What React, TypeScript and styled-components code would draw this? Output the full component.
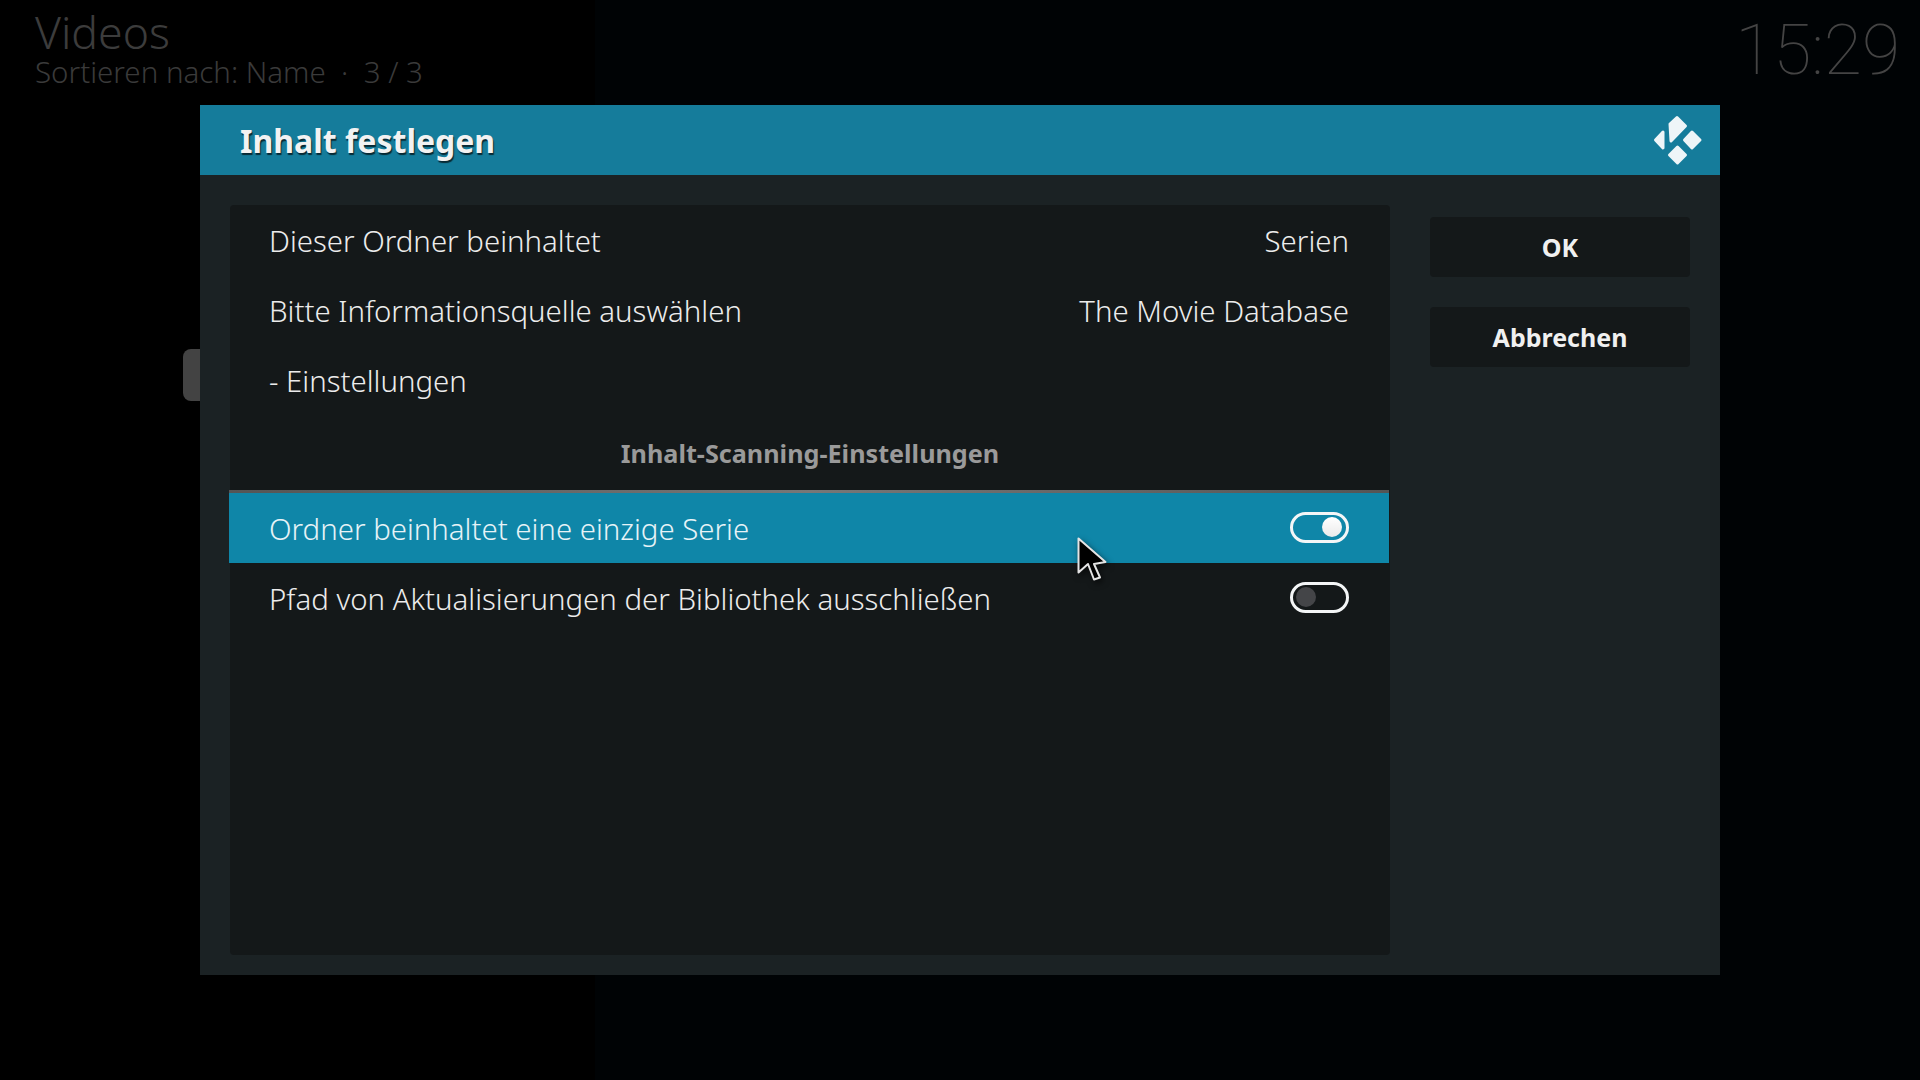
import React from "react";
import styled, { createGlobalStyle } from "styled-components";

const Global = createGlobalStyle`
  html, body { margin: 0; padding: 0; background: #000; }
  #root { width: 1920px; height: 1080px; overflow: hidden; }
`;

const Page = styled.div`
  position: relative;
  width: 1920px;
  height: 1080px;
  overflow: hidden;
  background: linear-gradient(90deg, #000 0, #000 595px, #000305 595px, #000305 100%);
  font-family: "Noto Sans", "Open Sans", sans-serif;
  color: #fff;
`;

const TopBar = styled.header`
  height: 105px;
  box-sizing: border-box;
  padding: 0 20px 0 35px;
  display: flex;
  justify-content: space-between;
  align-items: flex-start;
`;

const Crumbs = styled.div`
  display: flex;
  flex-direction: column;
  padding-top: 8px;
`;

const PageTitle = styled.div`
  font-size: 44.6px;
  line-height: 48px;
  font-weight: 300;
  color: #3c3c3c;
`;

const SortInfo = styled.div`
  font-size: 29.5px;
  line-height: 32px;
  font-weight: 300;
  color: #3a3a3a;
  white-space: pre;
`;

const Clock = styled.div`
  font-family: Roboto, "Noto Sans", sans-serif;
  font-size: 69.6px;
  line-height: 80px;
  font-weight: 100;
  color: #444;
  padding-top: 10px;
`;

const SideTab = styled.div`
  position: absolute;
  left: 183px;
  top: 349px;
  width: 30px;
  height: 52px;
  border-radius: 8px;
  background: #434343;
`;

const Dialog = styled.section`
  position: relative;
  margin-left: 200px;
  width: 1520px;
  height: 870px;
  background: #1b2224;
  display: flex;
  flex-direction: column;
`;

const DialogHeader = styled.div`
  height: 70px;
  flex: none;
  background: #157c9b;
  padding: 0 16px 0 40px;
  display: flex;
  align-items: center;
  justify-content: space-between;
`;

const DialogTitle = styled.h1`
  margin: 0;
  font-size: 32px;
  font-weight: 700;
  color: #f2f2f2;
  text-shadow: 1px 2px 1px #000a;
`;

const DialogBody = styled.div`
  flex: 1;
  display: flex;
  padding: 30px 30px 20px;
  gap: 40px;
`;

const Panel = styled.div`
  width: 1160px;
  height: 750px;
  background: #141819;
  border-radius: 4px;
  display: flex;
  flex-direction: column;
`;

const Row = styled.div<{ $active?: boolean }>`
  height: 70px;
  flex: none;
  box-sizing: border-box;
  margin: ${(p) => (p.$active ? "0 1px 0 -1px" : "0")};
  padding: 2px ${(p) => (p.$active ? "40px" : "41px")} 0 ${(p) => (p.$active ? "40px" : "39px")};
  display: flex;
  align-items: center;
  justify-content: space-between;
  font-size: 29.4px;
  font-weight: 300;
  color: ${(p) => (p.$active ? "#e6f3f7" : "#ececec")};
  background: ${(p) => (p.$active ? "#0f86a8" : "transparent")};
`;

const SectionLabel = styled.div`
  height: 75px;
  flex: none;
  box-sizing: border-box;
  display: flex;
  align-items: center;
  justify-content: center;
  font-size: 25.2px;
  font-weight: 700;
  color: #9a9a9a;
`;

const Divider = styled.div`
  height: 3px;
  flex: none;
  margin: 0 1px 0 -1px;
  background: linear-gradient(90deg, #555 0%, #777 50%, #555 100%);
`;

const Toggle = styled.div<{ $on?: boolean }>`
  width: 59px;
  height: 31px;
  box-sizing: border-box;
  border: 3px solid #f4f6f7;
  border-radius: 16px;
  padding: 0 ${(p) => (p.$on ? "4px" : "3px")};
  margin-top: -4px;
  display: flex;
  align-items: center;
  justify-content: ${(p) => (p.$on ? "flex-end" : "flex-start")};
`;

const Knob = styled.span<{ $on?: boolean }>`
  width: 20px;
  height: 20px;
  border-radius: 50%;
  background: ${(p) => (p.$on ? "linear-gradient(#fff, #eaeaea)" : "#444548")};
`;

const Actions = styled.div`
  width: 260px;
  padding-top: 12px;
  display: flex;
  flex-direction: column;
  gap: 30px;
`;

const ActionButton = styled.button`
  height: 60px;
  border: 0;
  border-radius: 4px;
  background: #141819;
  font-family: inherit;
  font-size: 25px;
  font-weight: 700;
  color: #f0f0f0;
`;

const Cursor = styled.svg`
  position: absolute;
  left: 1070px;
  top: 530px;
  filter: drop-shadow(2px 3px 3px rgba(0, 0, 0, 0.6));
`;

const KodiLogo = () => (
  <svg width="52" height="52" viewBox="1652 114 52 52" aria-hidden="true">
    <g fill="#eef5f8" stroke="#eef5f8" strokeWidth="3" strokeLinejoin="round">
      <polygon points="1663,132 1655.5,140 1663,148" />
      <polygon points="1670,124 1677,117.5 1685.5,126 1671,141" />
      <polygon points="1692,132 1700,140 1692,148 1684.5,140" />
      <polygon points="1677.5,147 1685.5,155 1677.5,163 1669.5,155" />
    </g>
  </svg>
);

const Arrow = () => (
  <Cursor width="44" height="60" viewBox="1070 530 44 60" aria-hidden="true">
    <polygon
      points="1078.5,538.5 1078.5,572.5 1088,564 1094,579.5 1100,577.5 1094,564 1105.5,562"
      fill="#000"
      stroke="#e4e4e4"
      strokeWidth="2"
      strokeLinejoin="round"
    />
  </Cursor>
);

export default function App() {
  return (
    <Page>
      <Global />
      <TopBar>
        <Crumbs>
          <PageTitle>Videos</PageTitle>
          <SortInfo>Sortieren nach: Name  ·  3 / 3</SortInfo>
        </Crumbs>
        <Clock>15:29</Clock>
      </TopBar>
      <SideTab />
      <Dialog>
        <DialogHeader>
          <DialogTitle>Inhalt festlegen</DialogTitle>
          <KodiLogo />
        </DialogHeader>
        <DialogBody>
          <Panel>
            <Row>
              <span>Dieser Ordner beinhaltet</span>
              <span>Serien</span>
            </Row>
            <Row>
              <span>Bitte Informationsquelle auswählen</span>
              <span>The Movie Database</span>
            </Row>
            <Row>
              <span>- Einstellungen</span>
            </Row>
            <SectionLabel>Inhalt-Scanning-Einstellungen</SectionLabel>
            <Divider />
            <Row $active>
              <span>Ordner beinhaltet eine einzige Serie</span>
              <Toggle $on>
                <Knob $on />
              </Toggle>
            </Row>
            <Row>
              <span>Pfad von Aktualisierungen der Bibliothek ausschließen</span>
              <Toggle>
                <Knob />
              </Toggle>
            </Row>
          </Panel>
          <Actions>
            <ActionButton>OK</ActionButton>
            <ActionButton>Abbrechen</ActionButton>
          </Actions>
        </DialogBody>
      </Dialog>
      <Arrow />
    </Page>
  );
}
